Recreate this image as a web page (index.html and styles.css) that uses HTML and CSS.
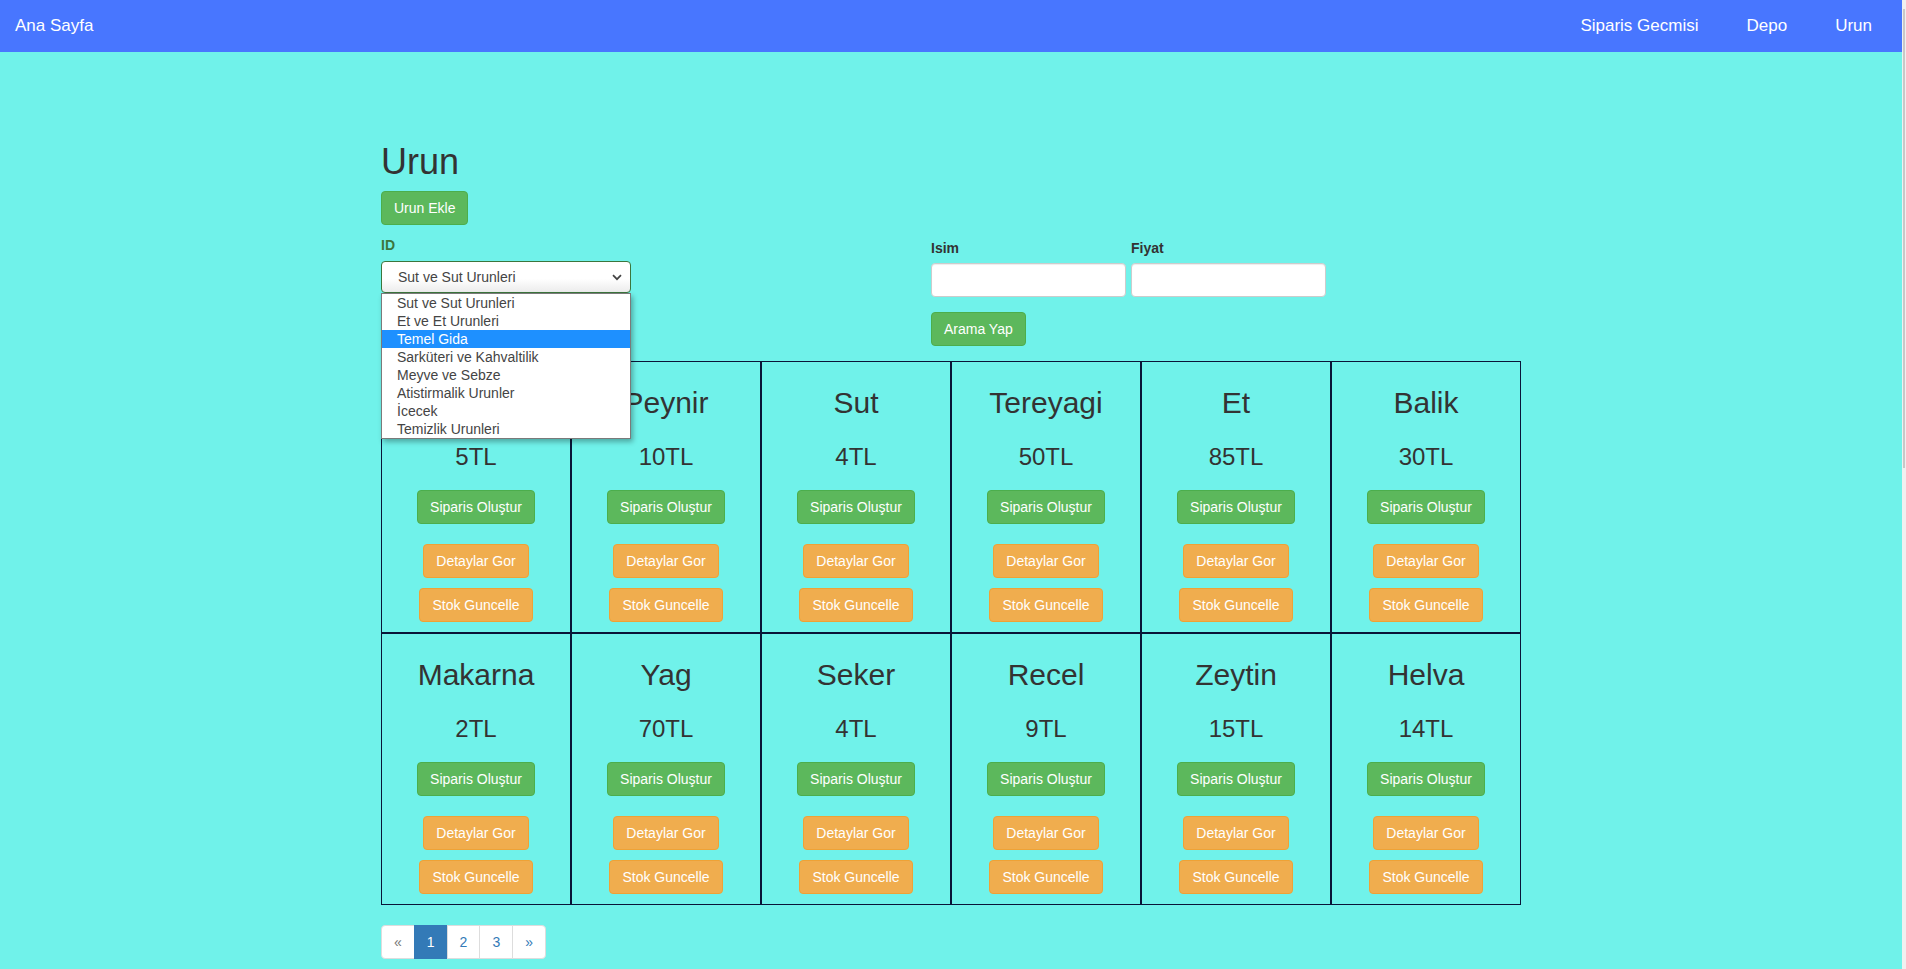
FILE: index.html
```html
<!DOCTYPE html>
<html lang="tr">
<head>
<meta charset="utf-8">
<title>Urun</title>
<link rel="stylesheet" href="styles.css">
</head>
<body>
<nav class="navbar">
  <a class="brand" href="#">Ana Sayfa</a>
  <ul class="nav-links">
    <li><a href="#">Siparis Gecmisi</a></li>
    <li><a href="#">Depo</a></li>
    <li><a href="#">Urun</a></li>
  </ul>
</nav>
<main class="container">
  <h1 class="page-title">Urun</h1>
  <button class="btn btn-success">Urun Ekle</button>
  <div class="filters">
    <div class="filter-id">
      <label class="label-success">ID</label>
      <div class="select-wrap">
        <div class="select">
          <span>Sut ve Sut Urunleri</span>
          <svg class="chevron" width="10" height="7" viewBox="0 0 10 7"><path d="M1 1.2 L5 5.2 L9 1.2" fill="none" stroke="#444" stroke-width="1.7"/></svg>
        </div>
        <ul class="listbox">
          <li>Sut ve Sut Urunleri</li>
          <li>Et ve Et Urunleri</li>
          <li class="hl">Temel Gida</li>
          <li>Sarküteri ve Kahvaltilik</li>
          <li>Meyve ve Sebze</li>
          <li>Atistirmalik Urunler</li>
          <li>İcecek</li>
          <li>Temizlik Urunleri</li>
        </ul>
      </div>
    </div>
    <div class="filter-search">
      <div class="fields">
        <div class="field"><label>Isim</label><input class="form-control" type="text"></div>
        <div class="field"><label>Fiyat</label><input class="form-control" type="text"></div>
      </div>
      <button class="btn btn-success btn-search">Arama Yap</button>
    </div>
  </div>
  <div class="products">
    <div class="cell"><h2>Yumurta</h2><h3>5TL</h3><button class="btn btn-success">Siparis Oluştur</button><button class="btn btn-warning">Detaylar Gor</button><button class="btn btn-warning btn-tight">Stok Guncelle</button></div>
    <div class="cell"><h2>Peynir</h2><h3>10TL</h3><button class="btn btn-success">Siparis Oluştur</button><button class="btn btn-warning">Detaylar Gor</button><button class="btn btn-warning btn-tight">Stok Guncelle</button></div>
    <div class="cell"><h2>Sut</h2><h3>4TL</h3><button class="btn btn-success">Siparis Oluştur</button><button class="btn btn-warning">Detaylar Gor</button><button class="btn btn-warning btn-tight">Stok Guncelle</button></div>
    <div class="cell"><h2>Tereyagi</h2><h3>50TL</h3><button class="btn btn-success">Siparis Oluştur</button><button class="btn btn-warning">Detaylar Gor</button><button class="btn btn-warning btn-tight">Stok Guncelle</button></div>
    <div class="cell"><h2>Et</h2><h3>85TL</h3><button class="btn btn-success">Siparis Oluştur</button><button class="btn btn-warning">Detaylar Gor</button><button class="btn btn-warning btn-tight">Stok Guncelle</button></div>
    <div class="cell"><h2>Balik</h2><h3>30TL</h3><button class="btn btn-success">Siparis Oluştur</button><button class="btn btn-warning">Detaylar Gor</button><button class="btn btn-warning btn-tight">Stok Guncelle</button></div>
    <div class="cell"><h2>Makarna</h2><h3>2TL</h3><button class="btn btn-success">Siparis Oluştur</button><button class="btn btn-warning">Detaylar Gor</button><button class="btn btn-warning btn-tight">Stok Guncelle</button></div>
    <div class="cell"><h2>Yag</h2><h3>70TL</h3><button class="btn btn-success">Siparis Oluştur</button><button class="btn btn-warning">Detaylar Gor</button><button class="btn btn-warning btn-tight">Stok Guncelle</button></div>
    <div class="cell"><h2>Seker</h2><h3>4TL</h3><button class="btn btn-success">Siparis Oluştur</button><button class="btn btn-warning">Detaylar Gor</button><button class="btn btn-warning btn-tight">Stok Guncelle</button></div>
    <div class="cell"><h2>Recel</h2><h3>9TL</h3><button class="btn btn-success">Siparis Oluştur</button><button class="btn btn-warning">Detaylar Gor</button><button class="btn btn-warning btn-tight">Stok Guncelle</button></div>
    <div class="cell"><h2>Zeytin</h2><h3>15TL</h3><button class="btn btn-success">Siparis Oluştur</button><button class="btn btn-warning">Detaylar Gor</button><button class="btn btn-warning btn-tight">Stok Guncelle</button></div>
    <div class="cell"><h2>Helva</h2><h3>14TL</h3><button class="btn btn-success">Siparis Oluştur</button><button class="btn btn-warning">Detaylar Gor</button><button class="btn btn-warning btn-tight">Stok Guncelle</button></div>
  </div>
  <ul class="pagination">
    <li class="disabled"><a href="#">&laquo;</a></li>
    <li class="active"><a href="#">1</a></li>
    <li><a href="#">2</a></li>
    <li><a href="#">3</a></li>
    <li><a href="#">&raquo;</a></li>
  </ul>
</main>
<div class="scrollbar"><div class="thumb"></div></div>
</body>
</html>
```

FILE: styles.css
```css
* { box-sizing: border-box; }
html, body { height: 100%; overflow: hidden; }
body {
  margin: 0;
  padding-right: 4px;
  background: #70f2ea;
  font-family: "Liberation Sans", Arial, sans-serif;
  font-size: 14px;
  line-height: 20px;
  color: #333;
}
.navbar {
  height: 52px;
  background: #4876ff;
  display: flex;
  align-items: center;
  justify-content: space-between;
}
.brand {
  padding-left: 15px;
  font-size: 17px;
  line-height: 20px;
  color: #fff;
  text-decoration: none;
}
.nav-links {
  list-style: none;
  margin: 0;
  padding: 0 30px 0 0;
  display: flex;
  gap: 48px;
}
.nav-links a {
  font-size: 17px;
  line-height: 20px;
  color: #fff;
  text-decoration: none;
}
.container {
  width: 1170px;
  margin: 0 auto;
  padding: 90px 15px 0;
}
.page-title {
  margin: 0 0 10px;
  font-size: 36px;
  line-height: 39px;
  font-weight: 500;
}
.btn {
  display: inline-block;
  padding: 6px 12px;
  font-family: inherit;
  font-size: 14px;
  line-height: 20px;
  border: 1px solid transparent;
  border-radius: 4px;
  color: #fff;
  cursor: pointer;
  white-space: nowrap;
}
.btn-success { background: #5cb85c; border-color: #4cae4c; }
.btn-warning { background: #f0ad4e; border-color: #eea236; }
.filters {
  margin-top: 10px;
  display: flex;
}
.filter-id { width: 550px; }
.filter-id label, .field label {
  display: block;
  font-weight: bold;
  line-height: 20px;
}
.label-success { color: #3c763d; margin-bottom: 6px; }
.select-wrap { position: relative; width: 250px; }
.select {
  height: 32px;
  border: 1px solid #3c763d;
  border-radius: 4px;
  background: linear-gradient(#fff 55%, #ececec);
  display: flex;
  align-items: center;
  justify-content: space-between;
  padding: 0 8px 0 16px;
  color: #444;
}
.chevron { display: block; }
.listbox {
  position: absolute;
  top: 32px;
  left: 0;
  width: 250px;
  margin: 0;
  padding: 0;
  list-style: none;
  background: #fff;
  border: 1px solid #7a7a7a;
  box-shadow: 2px 3px 5px rgba(0, 0, 0, 0.3);
  z-index: 5;
}
.listbox li {
  line-height: 18px;
  padding: 0 15px;
  color: #444;
}
.listbox li.hl { background: #1e90ff; color: #fff; }
.filter-search { padding-top: 3px; }
.fields { display: flex; gap: 5px; }
.field label { margin-bottom: 5px; }
.form-control {
  display: block;
  width: 195px;
  height: 34px;
  border: 1px solid #ccc;
  border-radius: 4px;
  background: #fff;
  box-shadow: inset 0 1px 1px rgba(0, 0, 0, 0.075);
}
.btn-search { margin-top: 15px; }
.products {
  margin-top: 15px;
  display: grid;
  grid-template-columns: repeat(6, 1fr);
}
.cell {
  height: 272px;
  border: 1px solid #0a1538;
  padding: 24px 0 10px;
  display: flex;
  flex-direction: column;
  align-items: center;
}
.cell h2 {
  margin: 0;
  font-size: 30px;
  line-height: 33px;
  font-weight: 500;
}
.cell h3 {
  margin: 25px 0 0;
  font-size: 24px;
  line-height: 26px;
  font-weight: 500;
}
.cell .btn { margin-top: 20px; }
.cell .btn-tight { margin-top: 10px; }
.pagination {
  margin: 20px 0 0;
  padding: 0;
  list-style: none;
  display: flex;
}
.pagination li a {
  display: block;
  padding: 6px 12px;
  line-height: 20px;
  border: 1px solid #ddd;
  margin-left: -1px;
  background: #fff;
  color: #337ab7;
  text-decoration: none;
}
.pagination li:first-child a { margin-left: 0; border-radius: 4px 0 0 4px; }
.pagination li:last-child a { border-radius: 0 4px 4px 0; }
.pagination li.disabled a { color: #777; }
.pagination li.active a { background: #337ab7; border-color: #337ab7; color: #fff; }
.scrollbar {
  position: fixed;
  top: 0;
  right: 0;
  width: 4px;
  height: 100%;
  background: #f0f0f0;
}
.scrollbar .thumb {
  margin-top: 9px;
  height: 459px;
  width: 2px;
  margin-left: 1px;
  background: #c8c8c8;
}
```
